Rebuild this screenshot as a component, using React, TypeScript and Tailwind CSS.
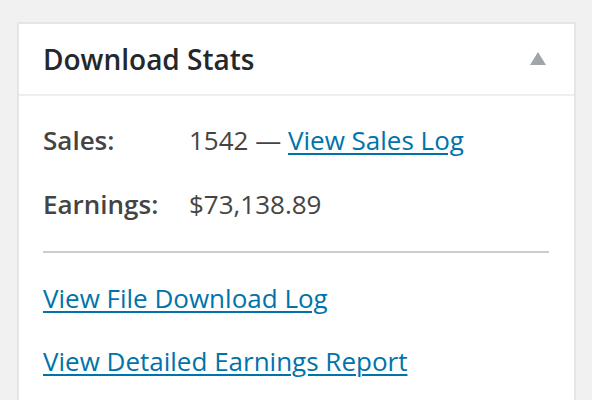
export default function App() {
  return (
    <div className="h-[400px] w-[592px] overflow-hidden bg-[#f1f1f1] pl-[17px] pt-[22px] font-['Open_Sans',sans-serif]">
      <section className="w-[559px] border-2 border-[#e5e5e5] bg-white">
        <header className="flex h-[72px] items-center justify-between border-b-2 border-[#eeeeee] pl-[24px] pr-[28px]">
          <h2 className="text-[28px] font-semibold leading-none text-[#23282d]">Download Stats</h2>
          <svg width="16" height="13" viewBox="0 0 16 13" className="mt-[-1px]">
            <polygon points="8,0 16,13 0,13" fill="#a0a5aa" />
          </svg>
        </header>
        <div className="px-[24px] pb-[40px] pt-[26px] text-[26px] leading-[36px] text-[#444]">
          <div className="grid grid-cols-[146px_1fr] gap-y-[28px]">
            <span className="font-semibold">Sales:</span>
            <span>
              1542 —{" "}
              <a href="#" className="text-[#0073aa] underline underline-offset-[3px] decoration-2">
                View Sales Log
              </a>
            </span>
            <span className="font-semibold">Earnings:</span>
            <span>$73,138.89</span>
          </div>
          <hr className="mb-[27px] mr-[1px] mt-[29px] border-t-2 border-[#cccccc]" />
          <div className="flex flex-col gap-[27px]">
            <a href="#" className="self-start text-[#0073aa] underline underline-offset-[3px] decoration-2">
              View File Download Log
            </a>
            <a href="#" className="self-start text-[#0073aa] underline underline-offset-[3px] decoration-2">
              View Detailed Earnings Report
            </a>
          </div>
        </div>
      </section>
    </div>
  );
}
